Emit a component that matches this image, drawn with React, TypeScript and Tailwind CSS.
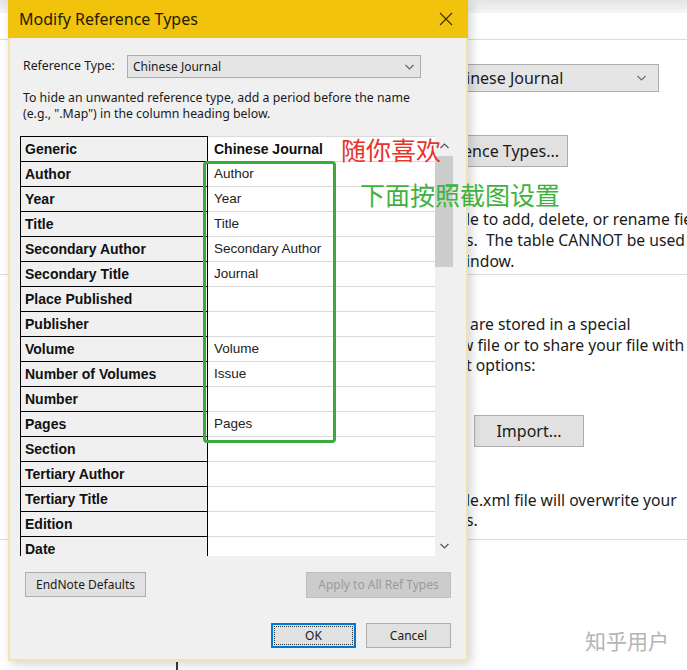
import React from "react";

const ui = "font-['Noto_Sans',sans-serif]";
const grid = "font-['Liberation_Sans',Arial,sans-serif]";
const cjk = "font-['Noto_Sans_CJK_SC','Noto_Sans',sans-serif]";

const rows: { field: string; value: string }[] = [
  { field: "Author", value: "Author" },
  { field: "Year", value: "Year" },
  { field: "Title", value: "Title" },
  { field: "Secondary Author", value: "Secondary Author" },
  { field: "Secondary Title", value: "Journal" },
  { field: "Place Published", value: "" },
  { field: "Publisher", value: "" },
  { field: "Volume", value: "Volume" },
  { field: "Number of Volumes", value: "Issue" },
  { field: "Number", value: "" },
  { field: "Pages", value: "Pages" },
  { field: "Section", value: "" },
  { field: "Tertiary Author", value: "" },
  { field: "Tertiary Title", value: "" },
  { field: "Edition", value: "" },
  { field: "Date", value: "" },
];

function Chevron({ up = false, className = "" }: { up?: boolean; className?: string }) {
  return (
    <svg width="9" height="6" viewBox="0 0 9 6" className={className}>
      <polyline
        points={up ? "0.5,5 4.5,1 8.5,5" : "0.5,1 4.5,5 8.5,1"}
        fill="none"
        stroke="currentColor"
        strokeWidth="1.2"
      />
    </svg>
  );
}

function BackgroundPage() {
  return (
    <div className={`${ui} text-[15.7px] text-[#1a1a1a] whitespace-nowrap`}>
      <div className="h-[40px] border-b border-[#dcdcdc]">
        <div className="h-[13px] bg-gradient-to-b from-[#e4e4e4] to-[#f6f6f6]" />
      </div>
      <div className="mt-[24px] ml-[440px] w-[219px] h-[28px] bg-[#e5e5e5] border border-[#adadad] flex items-center justify-between pl-[5px] pr-[12px] text-[16px]">
        <span>Chinese Journal</span>
        <Chevron className="text-[#707070]" />
      </div>
      <div className="mt-[43px] w-[568px] flex justify-end">
        <button className="h-[32px] px-[8px] bg-[#e1e1e1] border border-[#adadad] text-[16px]">
          Modify Reference Types...
        </button>
      </div>
      <div className="mt-[42px] ml-[466px] leading-[21px]">
        <div>le to add, delete, or rename fields for</div>
        <div>s.&nbsp; The table CANNOT be used to</div>
        <div>indow.</div>
      </div>
      <div className="mt-[2px] border-b border-[#dcdcdc]" />
      <div className="mt-[39px] ml-[466px] leading-[20.5px]">
        <div>&nbsp;are stored in a special</div>
        <div className="-ml-[5px]">w file or to share your file with</div>
        <div>t options:</div>
      </div>
      <button className="mt-[39px] ml-[474px] w-[110px] h-[32px] bg-[#e1e1e1] border border-[#adadad] text-[16px]">
        Import...
      </button>
      <div className="mt-[43px] ml-[466px] leading-[20px]">
        <div>le.xml file will overwrite your</div>
        <div>s.</div>
      </div>
      <div className="mt-[9px] border-b border-[#dcdcdc]" />
      <div className="mt-[122px] ml-[176px] w-[2px] h-[10px] bg-[#3a3a3a]" />
    </div>
  );
}

function FieldTable() {
  return (
    <div className={`${grid} relative mt-[14px] ml-[10px] w-[433px] h-[420px] flex overflow-hidden text-[13.5px] text-[#111]`}>
      <div className="w-[188px] border-l border-r border-t border-black bg-[#f0f0f0] font-bold text-[14px]">
        <div className="h-[25px] border-b border-black px-[4px] flex items-center">Generic</div>
        {rows.map((r) => (
          <div key={r.field} className="h-[25px] border-b border-black px-[4px] flex items-center">
            {r.field}
          </div>
        ))}
      </div>
      <div className="w-[227px] bg-white border-t border-[#dadada]">
        <div className="h-[25px] border-b border-[#dadada] px-[6px] flex items-center font-bold text-[14px]">
          Chinese Journal
        </div>
        {rows.map((r) => (
          <div key={r.field} className="h-[25px] border-b border-[#dadada] px-[6px] flex items-center text-[#222]">
            {r.value}
          </div>
        ))}
      </div>
      <div className="w-[18px] bg-[#f0f0f0] flex flex-col items-center">
        <div className="h-[20px] flex items-center justify-center text-[#555]">
          <Chevron up />
        </div>
        <div className="w-[18px] h-[111px] bg-[#cdcdcd]" />
        <div className="flex-1" />
        <div className="h-[20px] flex items-center justify-center text-[#555]">
          <Chevron />
        </div>
      </div>
      <div className="absolute left-[183px] top-[25px] w-[133px] h-[282px] border-[3px] border-[#3aab3a] rounded-[4px]" />
    </div>
  );
}

function Dialog() {
  return (
    <div
      className={`${ui} absolute left-[8px] top-0 w-[460px] h-[661px] bg-[#f0f0f0] border-x-2 border-b-2 border-[#efe3b0] shadow-[3px_3px_10px_rgba(0,0,0,0.18)] text-[12.3px] text-[#1a1a1a]`}
    >
      <div className="-mx-[2px] h-[38px] bg-[#f2c30c] flex items-center justify-between pl-[11px] pr-[15px]">
        <span className="text-[16px] text-[#231c00]">Modify Reference Types</span>
        <svg width="14" height="14" viewBox="0 0 14 14">
          <path d="M1 1 L13 13 M13 1 L1 13" stroke="#3a2e00" strokeWidth="1.1" />
        </svg>
      </div>

      <div className="mt-[17px] ml-[13px] flex items-center">
        <span className="w-[104px]">Reference Type:</span>
        <div className="w-[294px] h-[23px] bg-[#e5e5e5] border border-[#acacac] flex items-center justify-between pl-[5px] pr-[6px] text-[12px]">
          <span>Chinese Journal</span>
          <Chevron className="text-[#666]" />
        </div>
      </div>

      <div className="mt-[12px] ml-[13px] leading-[16px]">
        <div>To hide an unwanted reference type, add a period before the name</div>
        <div>(e.g., ".Map") in the column heading below.</div>
      </div>

      <FieldTable />

      <div className="mt-[16px] mx-[15px] flex justify-between text-[12px]">
        <button className="w-[121px] h-[25px] bg-[#e1e1e1] border border-[#adadad]">EndNote Defaults</button>
        <button className="w-[145px] h-[26px] bg-[#cccccc] border border-[#bfbfbf] text-[#9a9a9a]">
          Apply to All Ref Types
        </button>
      </div>

      <div className="mt-[25px] mr-[15px] flex justify-end gap-[10px] text-[12px]">
        <button className="w-[85px] h-[25px] bg-[#e1e1e1] border-2 border-[#0078d7] p-[1px]">
          <div className="w-full h-full border border-dotted border-[#333] flex items-center justify-center">OK</div>
        </button>
        <button className="w-[85px] h-[25px] bg-[#e1e1e1] border border-[#adadad]">Cancel</button>
      </div>
    </div>
  );
}

export default function App() {
  return (
    <div className="relative w-[687px] h-[670px] overflow-hidden bg-white">
      <BackgroundPage />
      <Dialog />
      <div className={`${cjk} absolute left-[341px] top-[134px] text-[25px] leading-[30px] text-[#e8322a]`}>随你喜欢</div>
      <div className={`${cjk} absolute left-[360px] top-[179px] text-[25px] leading-[30px] text-[#3db33d]`}>下面按照截图设置</div>
      <div className={`${cjk} absolute left-[585px] top-[627px] text-[21px] leading-[26px] text-[#b4b4b4]`}>知乎用户</div>
    </div>
  );
}
